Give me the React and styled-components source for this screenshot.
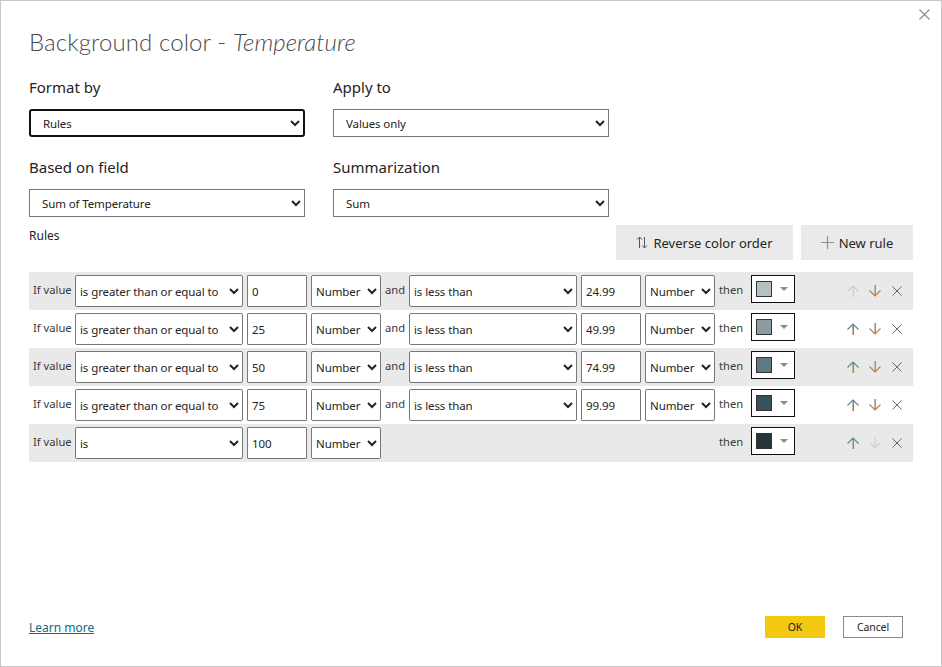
import React from "react";
import styled, { createGlobalStyle } from "styled-components";

const Global = createGlobalStyle`
  html, body {
    margin: 0;
    padding: 0;
    background: #fff;
  }
  * { box-sizing: border-box; }
`;

const FONT = `"Noto Sans", "Open Sans", sans-serif`;

const Dialog = styled.div`
  position: relative;
  width: 942px;
  height: 667px;
  border: 1px solid #c8c8c8;
  padding: 0 28px 28px;
  display: flex;
  flex-direction: column;
  font-family: ${FONT};
  color: #252423;
`;
const CloseButton = styled.svg`
  position: absolute;
  top: 8px;
  right: 11px;
  width: 11px;
  height: 11px;
`;
const Title = styled.h1`
  margin: 25px 0 0;
  height: 32px;
  font-family: Lato, sans-serif;
  font-size: 24px;
  line-height: 32px;
  font-weight: 300;
  letter-spacing: 0.1px;
  color: #4a4a4a;
  em { font-style: italic; }
`;
const FieldGrid = styled.div`
  display: grid;
  grid-template-columns: 276px 276px;
  column-gap: 28px;
  margin-top: 18px;
  row-gap: 19px;
`;
const Field = styled.div`
  display: flex;
  flex-direction: column;
  gap: 11px;
`;
const FieldLabel = styled.label`
  font-size: 15px;
  line-height: 22px;
  color: #252423;
`;
const BigSelect = styled.select`
  width: 276px;
  height: 28px;
  font-family: ${FONT};
  font-size: 11.5px;
  letter-spacing: -0.12px;
  color: #252423;
  background: #fff;
  padding-left: 8px;
  border: ${p => (p.$focused ? "2px solid #111" : "1px solid #777")};
  border-radius: ${p => (p.$focused ? "3px" : "0")};
  outline: none;
`;
const ToolRow = styled.div`
  display: flex;
  align-items: flex-start;
  margin-top: 8px;
  height: 47px;
`;
const RulesLabel = styled.div`
  font-size: 12px;
  line-height: 18px;
  margin-top: 2px;
`;
const ToolButtons = styled.div`
  margin-left: auto;
  display: flex;
  gap: 8px;
`;
const ToolButton = styled.button`
  width: ${p => p.$width}px;
  height: 35px;
  border: 0;
  background: #eaeaea;
  font-family: ${FONT};
  font-size: 13px;
  color: #252423;
  display: flex;
  align-items: center;
  justify-content: center;
  gap: 5px;
  padding: 0;
`;
const Rule = styled.div`
  display: grid;
  grid-template-columns: 38px 168px 60px 70px 20px 168px 60px 70px 28px 44px 1fr;
  column-gap: 4px;
  height: 38px;
  padding: 3px 0 0 4px;
  align-items: start;
  background: ${p => (p.$shaded ? "#e9e9e9" : "#fff")};
`;
const Word = styled.span`
  font-size: 11.2px;
  line-height: 30px;
  color: #3b3a39;
  white-space: nowrap;
  ${p => p.$column && `grid-column: ${p.$column};`}
`;
const RuleSelect = styled.select`
  width: 100%;
  height: 32px;
  font-family: ${FONT};
  font-size: 11.5px;
  letter-spacing: -0.1px;
  color: #252423;
  background: #fff;
  padding: 0;
  border: 1px solid #777;
  border-radius: 2px;
  outline: none;
`;
const RuleInput = styled.input`
  width: 100%;
  height: 32px;
  font-family: ${FONT};
  font-size: 11.5px;
  letter-spacing: -0.1px;
  color: #252423;
  background: #fff;
  padding: 0 4px;
  border: 1px solid #777;
  border-radius: 1px;
  outline: none;
`;
const ColorPicker = styled.div`
  width: 44px;
  height: 28px;
  border: 1px solid #111;
  background: #fff;
  display: flex;
  align-items: center;
  padding-left: 4px;
`;
const Swatch = styled.span`
  width: 16px;
  height: 16px;
  border: 1px solid #333;
  background: ${p => p.$color};
`;
const Caret = styled.span`
  margin-left: 8px;
  width: 0;
  height: 0;
  border-left: 4px solid transparent;
  border-right: 4px solid transparent;
  border-top: 4px solid #8a8a8a;
`;
const Actions = styled.div`
  display: flex;
  align-items: center;
  height: 32px;
  padding-left: 47px;
  gap: 8px;
`;
const ActionIcon = styled.svg`
  width: 14px;
  height: 14px;
  flex: none;
  opacity: ${p => (p.$disabled ? 0.25 : 1)};
`;
const Footer = styled.div`
  margin-top: auto;
  display: flex;
  align-items: center;
`;
const LearnMore = styled.a`
  font-size: 12px;
  color: #0f6a8b;
  text-decoration: underline;
`;
const FooterButtons = styled.div`
  margin-left: auto;
  margin-right: 10px;
  display: flex;
  gap: 18px;
`;
const OkButton = styled.button`
  width: 60px;
  height: 22px;
  border: 0;
  padding: 0;
  background: #f2c811;
  font-family: ${FONT};
  font-size: 10.5px;
  letter-spacing: -0.1px;
  color: #252423;
`;
const CancelButton = styled(OkButton)`
  background: #fff;
  border: 1px solid #8a8a8a;
`;

const UpIcon = ({ disabled }) => (
  <ActionIcon viewBox="0 0 14 14" $disabled={disabled} fill="none" strokeWidth="1.1">
    <path d="M6.5 13V2" stroke="#d9b98a" />
    <path d="M7.5 13V2" stroke="#4f9ab8" />
    <path d="M1.5 7.5L7 2L12.5 7.5" stroke="#4f8a9f" />
  </ActionIcon>
);
const DownIcon = ({ disabled }) => (
  <ActionIcon viewBox="0 0 14 14" $disabled={disabled} fill="none" strokeWidth="1.1">
    <path d="M6.5 1V12" stroke="#a9c4d0" />
    <path d="M7.5 1V12" stroke="#cf8f3f" />
    <path d="M1.5 6.5L7 12L12.5 6.5" stroke="#bd803a" />
  </ActionIcon>
);
const RemoveIcon = () => (
  <ActionIcon viewBox="0 0 14 14" fill="none" stroke="#6a6474" strokeWidth="1">
    <path d="M2.5 2.5L11.5 11.5M11.5 2.5L2.5 11.5" />
  </ActionIcon>
);

const rules = [
  { min: "0", max: "24.99", color: "#b4c1c4", first: true },
  { min: "25", max: "49.99", color: "#8b9da2" },
  { min: "50", max: "74.99", color: "#5f7a82" },
  { min: "75", max: "99.99", color: "#37525a" },
  { min: "100", color: "#25353a", last: true }
];

const RuleRow = ({ rule, shaded }) => (
  <Rule $shaded={shaded}>
    <Word>If value</Word>
    <RuleSelect defaultValue={rule.last ? "is" : "gte"}>
      <option value="gte">is greater than or equal to</option>
      <option value="is">is</option>
    </RuleSelect>
    <RuleInput defaultValue={rule.min} />
    <RuleSelect>
      <option>Number</option>
    </RuleSelect>
    {!rule.last && (
      <>
        <Word>and</Word>
        <RuleSelect>
          <option>is less than</option>
        </RuleSelect>
        <RuleInput defaultValue={rule.max} />
        <RuleSelect>
          <option>Number</option>
        </RuleSelect>
      </>
    )}
    <Word $column={9}>then</Word>
    <ColorPicker>
      <Swatch $color={rule.color} />
      <Caret />
    </ColorPicker>
    <Actions>
      <UpIcon disabled={rule.first} />
      <DownIcon disabled={rule.last} />
      <RemoveIcon />
    </Actions>
  </Rule>
);

export default function App() {
  return (
    <>
      <Global />
      <Dialog>
        <CloseButton viewBox="0 0 11 11" fill="none" stroke="#8a8a8a" strokeWidth="1.1">
          <path d="M0.5 0.5L10.5 10.5M10.5 0.5L0.5 10.5" />
        </CloseButton>
        <Title>
          Background color - <em>Temperature</em>
        </Title>
        <FieldGrid>
          <Field>
            <FieldLabel>Format by</FieldLabel>
            <BigSelect $focused>
              <option>Rules</option>
            </BigSelect>
          </Field>
          <Field>
            <FieldLabel>Apply to</FieldLabel>
            <BigSelect>
              <option>Values only</option>
            </BigSelect>
          </Field>
          <Field>
            <FieldLabel>Based on field</FieldLabel>
            <BigSelect>
              <option>Sum of Temperature</option>
            </BigSelect>
          </Field>
          <Field>
            <FieldLabel>Summarization</FieldLabel>
            <BigSelect>
              <option>Sum</option>
            </BigSelect>
          </Field>
        </FieldGrid>
        <ToolRow>
          <RulesLabel>Rules</RulesLabel>
          <ToolButtons>
            <ToolButton $width={177}>
              <svg width="12" height="13" viewBox="0 0 12 13" fill="none" stroke="#555" strokeWidth="1">
                <path d="M3.5 12V1M1 3.5L3.5 1L6 3.5M8.5 1V12M6 9.5L8.5 12L11 9.5" />
              </svg>
              Reverse color order
            </ToolButton>
            <ToolButton $width={112}>
              <svg width="13" height="13" viewBox="0 0 13 13" fill="none" stroke="#a08a86" strokeWidth="1.2">
                <path d="M6.5 0V13M0 6.5H13" />
              </svg>
              New rule
            </ToolButton>
          </ToolButtons>
        </ToolRow>
        {rules.map((rule, i) => (
          <RuleRow key={rule.min} rule={rule} shaded={i % 2 === 0} />
        ))}
        <Footer>
          <LearnMore href="#">Learn more</LearnMore>
          <FooterButtons>
            <OkButton>OK</OkButton>
            <CancelButton>Cancel</CancelButton>
          </FooterButtons>
        </Footer>
      </Dialog>
    </>
  );
}
